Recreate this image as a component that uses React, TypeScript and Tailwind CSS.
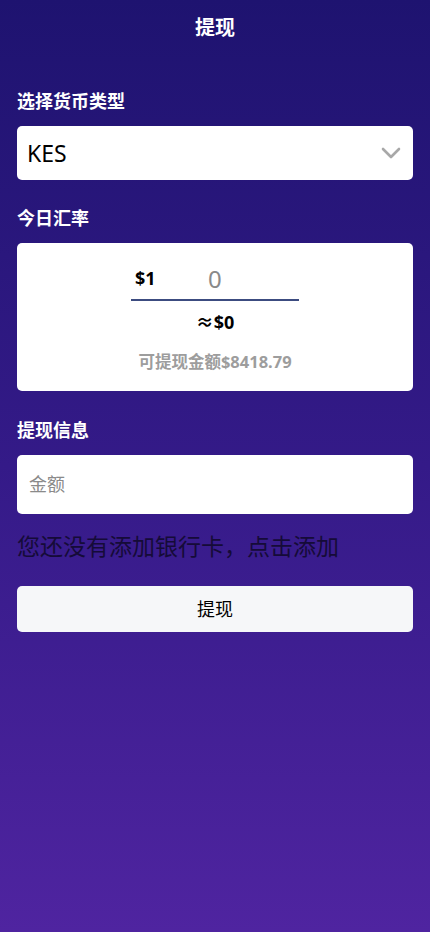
const font = { fontFamily: '"Noto Sans", "Noto Sans CJK SC", sans-serif' };

const Chevron = () => (
  <svg width="20" height="12" viewBox="0 0 20 12" fill="none" className="shrink-0">
    <path d="M2 2l8 8 8-8" stroke="#a8a8a8" strokeWidth="2.6" strokeLinecap="round" strokeLinejoin="round" />
  </svg>
);

export default function App() {
  return (
    <div
      className="min-h-screen w-full bg-linear-to-b from-[#1e1370] via-[#341a88] to-[#4f24a0] px-[17px] text-white"
      style={font}
    >
      {/* Header */}
      <header className="flex h-[56px] items-center justify-center">
        <h1 className="text-[20px] font-bold">提现</h1>
      </header>

      {/* Currency */}
      <section className="mt-[32px]">
        <h2 className="text-[18px] font-bold leading-[26px]">选择货币类型</h2>
        <div className="mt-[12px] flex h-[54px] items-center justify-between rounded-[5px] bg-white pl-[10px] pr-[12px]">
          <span className="text-[23px] text-black">KES</span>
          <Chevron />
        </div>
      </section>

      {/* Rate */}
      <section className="mt-[25px]">
        <h2 className="text-[18px] font-bold leading-[26px]">今日汇率</h2>
        <div className="mt-[12px] flex h-[148px] flex-col items-center rounded-[5px] bg-white pt-[15px]">
          <div className="flex h-[43px] w-[168px] items-center border-b-2 border-[#3c4c80]">
            <span className="w-[77px] pl-[4px] text-[18px] font-bold text-black">$1</span>
            <span className="text-[24px] text-[#8a8a8a]">0</span>
          </div>
          <div className="mt-[8px] text-[18px] font-bold text-black">≈$0</div>
          <div className="mt-[14px] text-[16.5px] font-bold text-[#9d9d9d]">可提现金额$8418.79</div>
        </div>
      </section>

      {/* Withdraw info */}
      <section className="mt-[26px]">
        <h2 className="text-[18px] font-bold leading-[26px]">提现信息</h2>
        <div className="mt-[12px] flex h-[59px] items-center rounded-[5px] bg-white px-[12px]">
          <span className="text-[18px] text-[#8a8a8a]">金额</span>
        </div>
        <p className="mt-[14px] text-[23px] leading-[36px] text-[#150b38]">您还没有添加银行卡，点击添加</p>
        <button className="mt-[22px] flex h-[46px] w-full items-center justify-center rounded-[5px] bg-[#f6f7f9] text-[18px] text-black">
          提现
        </button>
      </section>
    </div>
  );
}
